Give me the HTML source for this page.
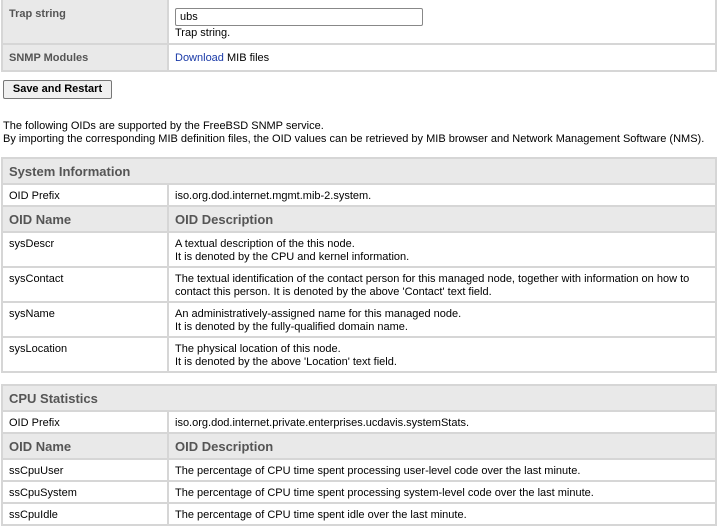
<!DOCTYPE html>
<html><head><meta charset="utf-8"><style>
body{margin:0;background:#fff;font-family:"Liberation Sans",sans-serif;font-size:11px;color:#000;width:720px;height:525px;overflow:hidden;position:relative}
table{position:absolute;left:1px;width:716px;border-collapse:collapse;table-layout:fixed}
td{border:2px solid #d6d6d6;padding:0 6px;vertical-align:top}
td.l{background:#e9e9e9;color:#555;font-weight:bold}
tr.h td{background:#e9e9e9;color:#555;font-weight:bold;font-size:13px;vertical-align:middle}
tr.r td{vertical-align:top;padding-top:5px;line-height:13px}
a{color:#1a3aa8;text-decoration:none}
.btn{position:absolute;left:3px;top:80px;width:107px;height:17px;border:1px solid #777;border-radius:2px;background:#f0f0f0;font-weight:bold;font-size:11px;text-align:center;line-height:17px}
.p{position:absolute;left:3px;top:120px;line-height:13px}
</style></head><body>
<table style="top:-2px">
<col style="width:166px"><col>
<tr style="height:45px"><td class="l" style="padding-top:8px">Trap string</td><td style="padding-top:8px"><div style="border:1px solid #888;border-radius:2px;padding-left:4px;line-height:16px;box-sizing:border-box;width:248px;height:18px">ubs</div><div style="margin-top:1px">Trap string.</div></td></tr>
<tr style="height:27px"><td class="l" style="vertical-align:middle">SNMP Modules</td><td style="vertical-align:middle"><a>Download</a> MIB files</td></tr>
</table>
<div class="btn">Save and Restart</div>
<div class="p">The following OIDs are supported by the FreeBSD SNMP service.<br>By importing the corresponding MIB definition files, the OID values can be retrieved by MIB browser and Network Management Software (NMS).</div>
<table style="top:157px">
<col style="width:166px"><col>
<tr class="h" style="height:26px"><td colspan="2">System Information</td></tr>
<tr class="r" style="height:22px"><td>OID Prefix</td><td>iso.org.dod.internet.mgmt.mib-2.system.</td></tr>
<tr class="h" style="height:26px"><td>OID Name</td><td>OID Description</td></tr>
<tr class="r" style="height:35px"><td>sysDescr</td><td>A textual description of the this node.<br>It is denoted by the CPU and kernel information.</td></tr>
<tr class="r" style="height:35px"><td>sysContact</td><td>The textual identification of the contact person for this managed node, together with information on how to contact this person. It is denoted by the above 'Contact' text field.</td></tr>
<tr class="r" style="height:35px"><td>sysName</td><td>An administratively-assigned name for this managed node.<br>It is denoted by the fully-qualified domain name.</td></tr>
<tr class="r" style="height:35px"><td>sysLocation</td><td>The physical location of this node.<br>It is denoted by the above 'Location' text field.</td></tr>
</table>
<table style="top:384px">
<col style="width:166px"><col>
<tr class="h" style="height:26px"><td colspan="2">CPU Statistics</td></tr>
<tr class="r" style="height:22px"><td>OID Prefix</td><td>iso.org.dod.internet.private.enterprises.ucdavis.systemStats.</td></tr>
<tr class="h" style="height:26px"><td>OID Name</td><td>OID Description</td></tr>
<tr class="r" style="height:22px"><td>ssCpuUser</td><td>The percentage of CPU time spent processing user-level code over the last minute.</td></tr>
<tr class="r" style="height:22px"><td>ssCpuSystem</td><td>The percentage of CPU time spent processing system-level code over the last minute.</td></tr>
<tr class="r" style="height:22px"><td>ssCpuIdle</td><td>The percentage of CPU time spent idle over the last minute.</td></tr>
</table>
</body></html>
